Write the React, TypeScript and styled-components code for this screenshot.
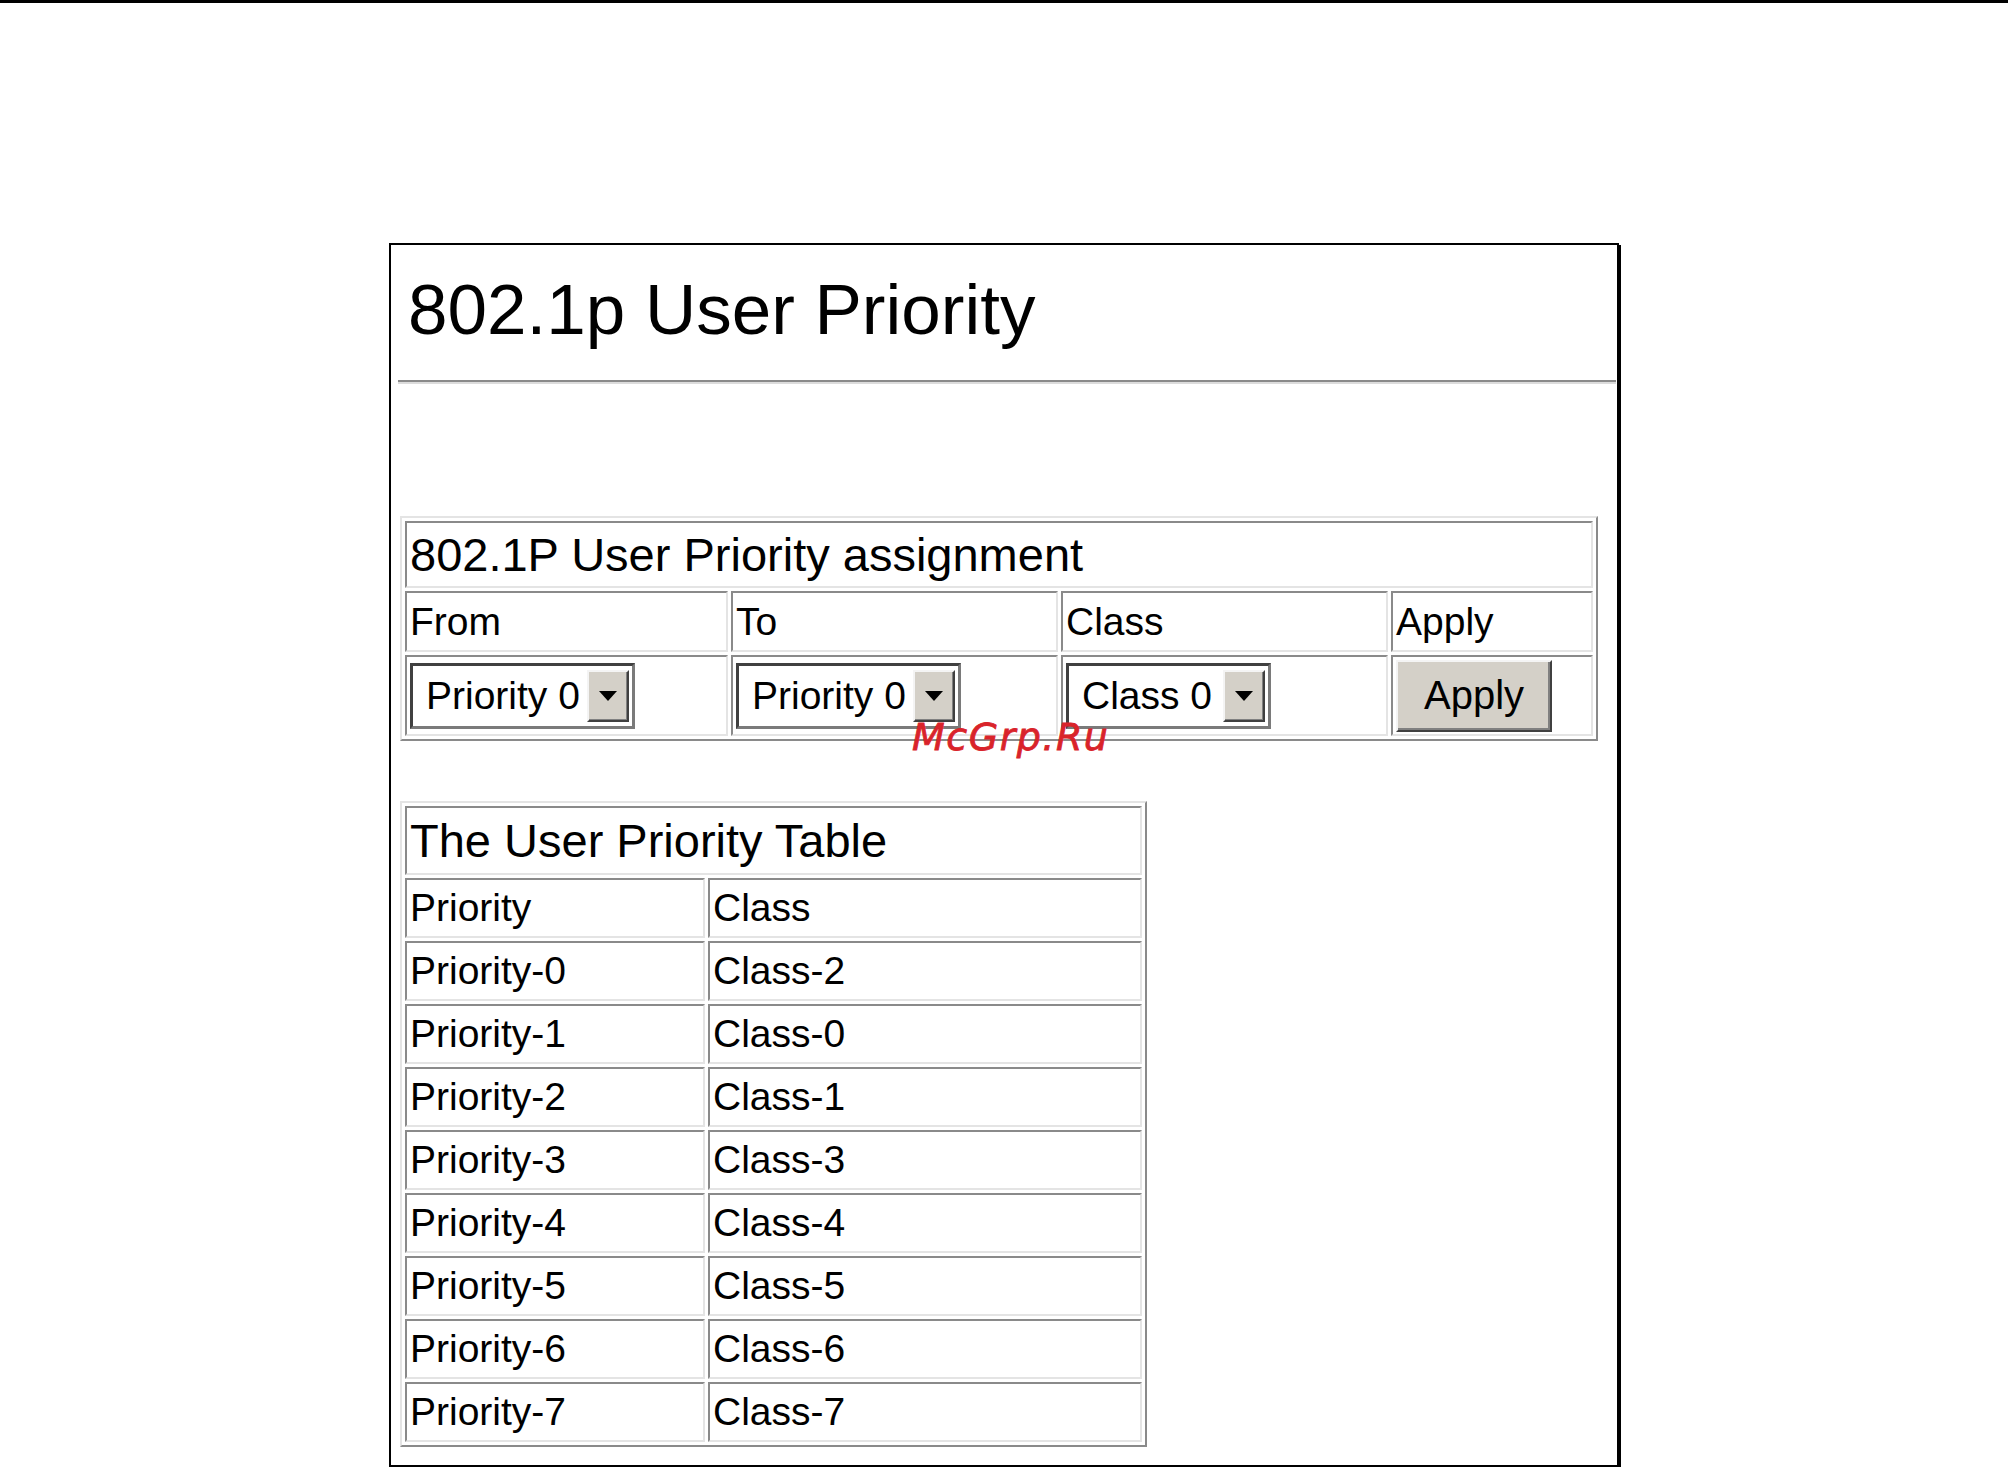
import React from 'react';
import styled, { createGlobalStyle } from 'styled-components';

const GlobalStyle = createGlobalStyle`
    html, body {
        margin: 0;
        padding: 0;
        background: #fff;
    }
    body {
        font-family: 'Liberation Sans', Arial, sans-serif;
        color: #000;
    }
`;

const TopRule = styled.div`
    height: 3px;
    background: #000;
`;

const Frame = styled.section`
    position: relative;
    box-sizing: border-box;
    width: 1230px;
    margin: 240px 0 0 389px;
    padding: 0 1px 18px 7px;
    border: 2px solid #000;
    box-shadow: 2px 2px 0 #000;
`;

const Title = styled.h1`
    margin: 24px 0 0;
    padding-left: 10px;
    font-size: 71px;
    font-weight: normal;
    line-height: normal;
`;

const Divider = styled.hr`
    margin: 30px 0 0;
    height: 0;
    border: 0;
    border-top: 2px solid #8a8a8a;
    border-bottom: 2px solid #dcdcdc;
`;

const Grid = styled.table<{ $width: number; $top: number }>`
    width: ${(p) => p.$width}px;
    margin: ${(p) => p.$top}px 0 0 2px;
    table-layout: fixed;
    border-collapse: separate;
    border-spacing: 3px;
    border: 2px solid;
    border-color: #e4e4e4 #8a8a8a #8a8a8a #e4e4e4;
`;

const Col = styled.col<{ $w: number }>`
    width: ${(p) => p.$w}px;
`;

const Cell = styled.td<{ $h: number; $caption?: boolean }>`
    box-sizing: border-box;
    height: ${(p) => p.$h}px;
    padding: 0 3px;
    border: 2px solid;
    border-color: #8a8a8a #e4e4e4 #e4e4e4 #8a8a8a;
    font-size: ${(p) => (p.$caption ? 47 : 39)}px;
    line-height: normal;
    vertical-align: middle;
    white-space: nowrap;
    overflow: hidden;
`;

const Select = styled.div<{ $w: number }>`
    display: inline-flex;
    align-items: stretch;
    box-sizing: border-box;
    width: ${(p) => p.$w}px;
    height: 66px;
    padding: 4px 3px 4px 0;
    border: 3px solid;
    border-color: #404040 #7a7a7a #7a7a7a #404040;
    background: #fff;
    vertical-align: middle;
`;

const SelectText = styled.span`
    flex: 1;
    display: flex;
    align-items: center;
    padding-left: 13px;
    font-size: 39px;
`;

const DropButton = styled.span`
    display: flex;
    align-items: center;
    justify-content: center;
    box-sizing: border-box;
    width: 42px;
    background: #d4d0c8;
    border: 2px solid;
    border-color: #f4f4f4 #404040 #404040 #f4f4f4;
    box-shadow: inset -1px -1px 0 #808080;
`;

const Arrow = styled.span`
    width: 0;
    height: 0;
    border-left: 9px solid transparent;
    border-right: 9px solid transparent;
    border-top: 10px solid #000;
`;

const ApplyButton = styled.button`
    box-sizing: border-box;
    width: 156px;
    height: 72px;
    padding: 0;
    background: #d4d0c8;
    border: 2px solid;
    border-color: #f4f4f4 #404040 #404040 #f4f4f4;
    box-shadow: inset -2px -2px 0 #808080;
    font-family: 'Liberation Sans', Arial, sans-serif;
    font-size: 40px;
    color: #000;
    vertical-align: middle;
`;

const Watermark = styled.div`
    position: absolute;
    left: 521px;
    top: 473px;
    font-family: 'DejaVu Sans', sans-serif;
    font-style: italic;
    font-size: 38px;
    line-height: 1;
    letter-spacing: 1.5px;
    color: #d9232a;
    -webkit-text-stroke: 0.8px #d9232a;
    pointer-events: none;
`;

const priorityTable = [
    ['Priority-0', 'Class-2'],
    ['Priority-1', 'Class-0'],
    ['Priority-2', 'Class-1'],
    ['Priority-3', 'Class-3'],
    ['Priority-4', 'Class-4'],
    ['Priority-5', 'Class-5'],
    ['Priority-6', 'Class-6'],
    ['Priority-7', 'Class-7'],
];

function Dropdown({ value, width }: { value: string; width: number }) {
    return (
        <Select $w={width}>
            <SelectText>{value}</SelectText>
            <DropButton>
                <Arrow />
            </DropButton>
        </Select>
    );
}

export default function App() {
    return (
        <>
            <GlobalStyle />
            <TopRule />
            <Frame>
                <Title>802.1p User Priority</Title>
                <Divider />

                <Grid $width={1198} $top={132}>
                    <colgroup>
                        <Col $w={323} />
                        <Col $w={327} />
                        <Col $w={327} />
                        <Col $w={202} />
                    </colgroup>
                    <tbody>
                        <tr>
                            <Cell $h={67} $caption colSpan={4}>
                                802.1P User Priority assignment
                            </Cell>
                        </tr>
                        <tr>
                            <Cell $h={61}>From</Cell>
                            <Cell $h={61}>To</Cell>
                            <Cell $h={61}>Class</Cell>
                            <Cell $h={61}>Apply</Cell>
                        </tr>
                        <tr>
                            <Cell $h={81}>
                                <Dropdown value="Priority 0" width={225} />
                            </Cell>
                            <Cell $h={81}>
                                <Dropdown value="Priority 0" width={225} />
                            </Cell>
                            <Cell $h={81}>
                                <Dropdown value="Class 0" width={205} />
                            </Cell>
                            <Cell $h={81}>
                                <ApplyButton type="button">Apply</ApplyButton>
                            </Cell>
                        </tr>
                    </tbody>
                </Grid>

                <Grid $width={747} $top={60}>
                    <colgroup>
                        <Col $w={300} />
                        <Col $w={434} />
                    </colgroup>
                    <tbody>
                        <tr>
                            <Cell $h={69} $caption colSpan={2}>
                                The User Priority Table
                            </Cell>
                        </tr>
                        <tr>
                            <Cell $h={60}>Priority</Cell>
                            <Cell $h={60}>Class</Cell>
                        </tr>
                        {priorityTable.map(([priority, cls]) => (
                            <tr key={priority}>
                                <Cell $h={60}>{priority}</Cell>
                                <Cell $h={60}>{cls}</Cell>
                            </tr>
                        ))}
                    </tbody>
                </Grid>

                <Watermark>McGrp.Ru</Watermark>
            </Frame>
        </>
    );
}
